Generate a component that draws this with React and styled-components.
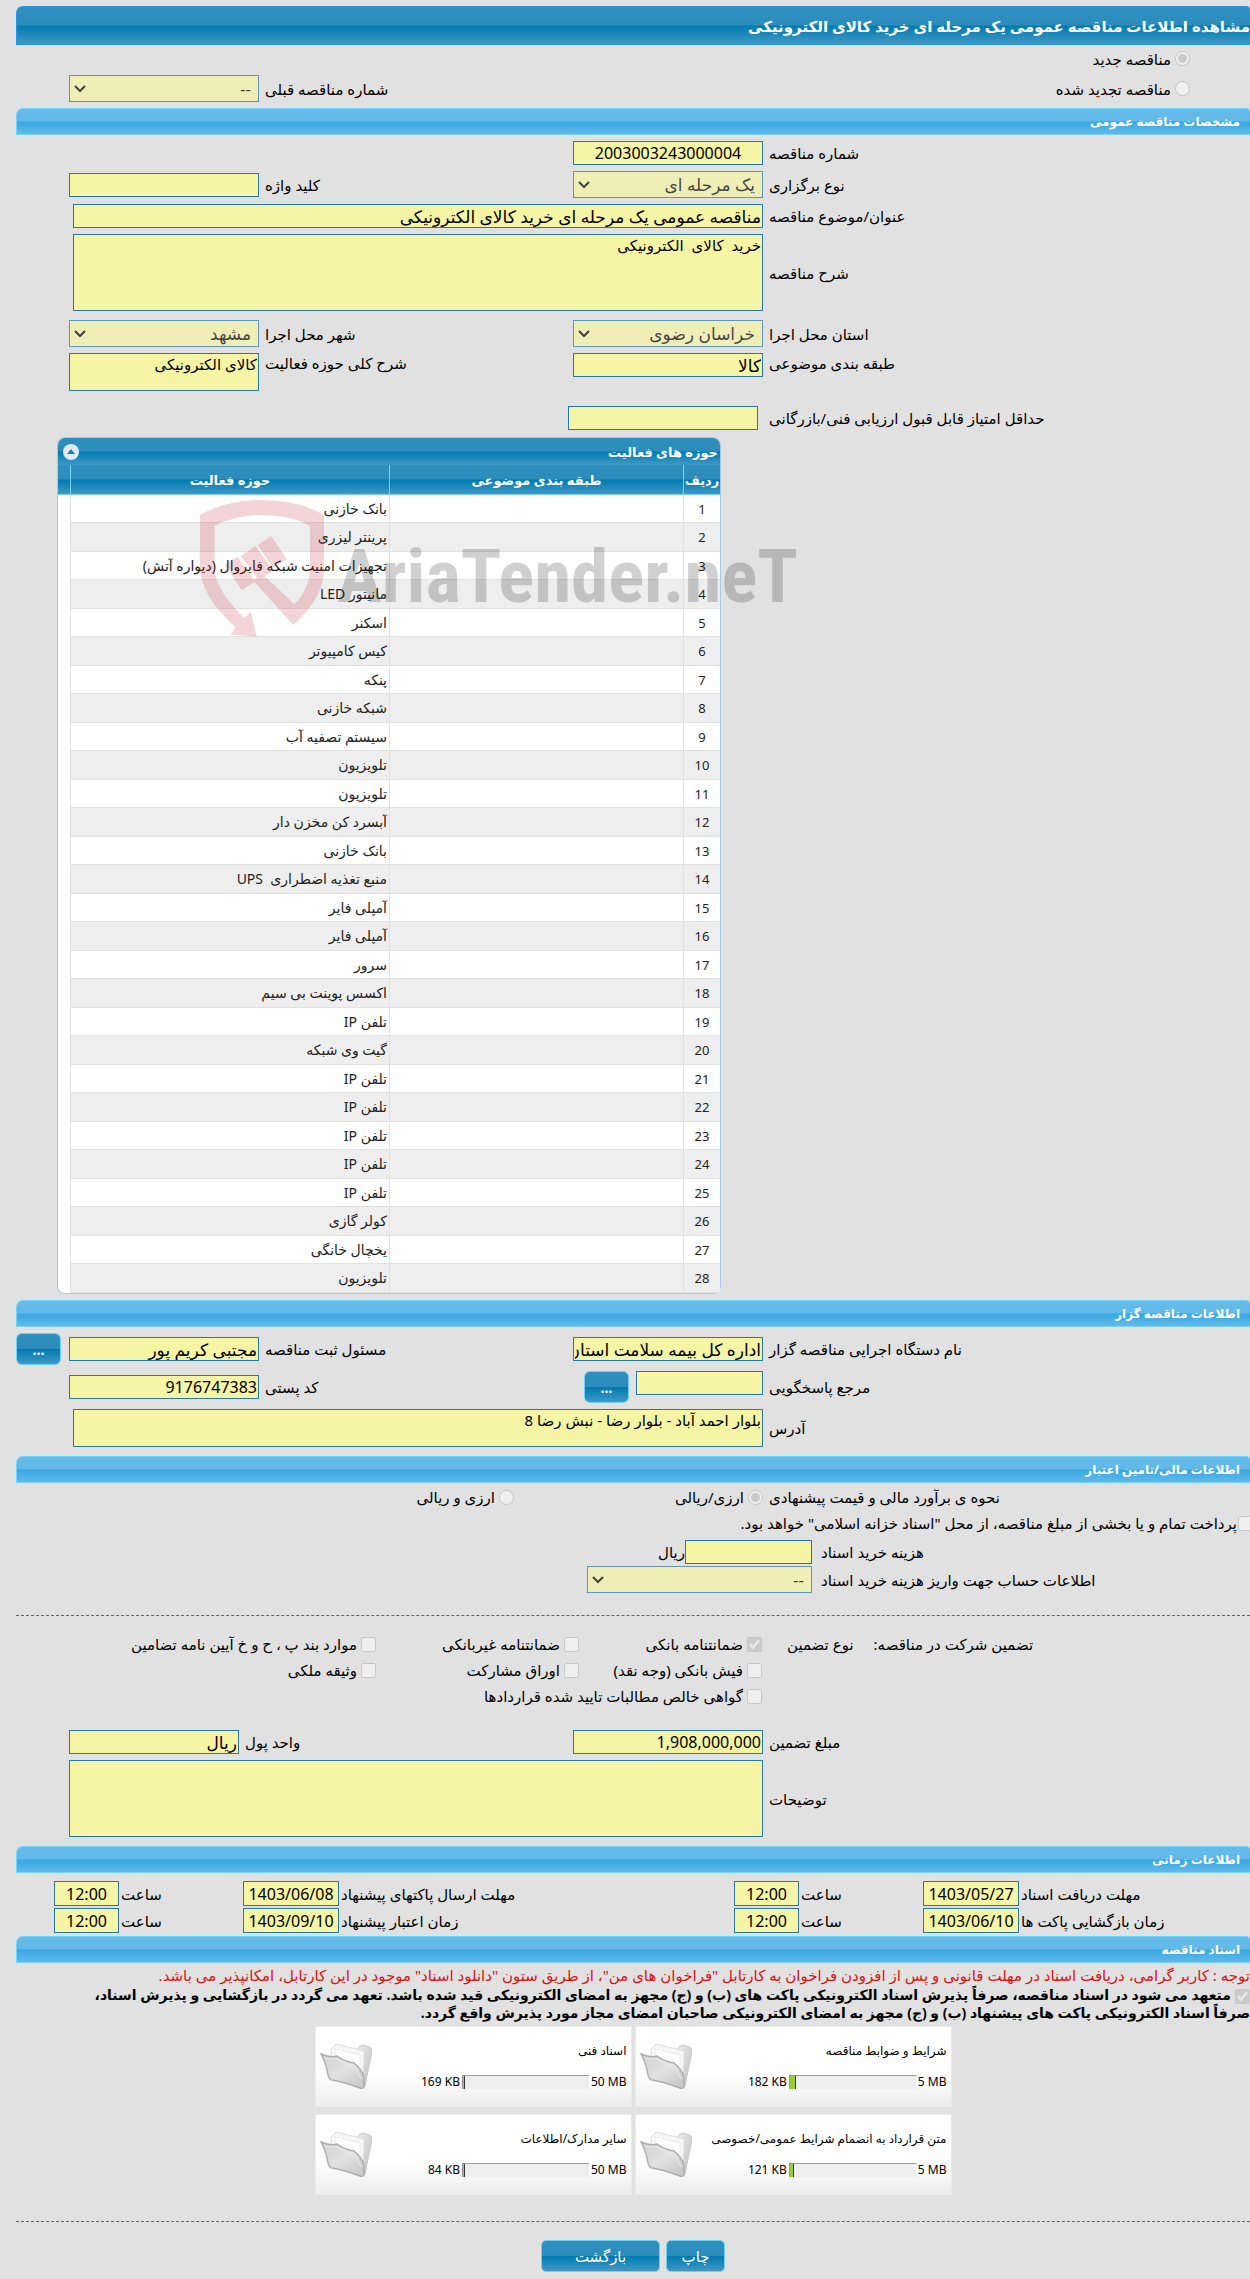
import React from 'react'
import styled, { createGlobalStyle, css } from 'styled-components'

const activities = [
  'بانک خازنی',
  'پرینتر لیزری',
  'تجهیزات امنیت شبکه فایروال (دیواره آتش)',
  'مانیتور LED',
  'اسکنر',
  'کیس کامپیوتر',
  'پنکه',
  'شبکه خازنی',
  'سیستم تصفیه آب',
  'تلویزیون',
  'تلویزیون',
  'آبسرد کن مخزن دار',
  'بانک خازنی',
  'منبع تغذیه اضطراری  UPS',
  'آمپلی فایر',
  'آمپلی فایر',
  'سرور',
  'اکسس پوینت بی سیم',
  'تلفن IP',
  'گیت وی شبکه',
  'تلفن IP',
  'تلفن IP',
  'تلفن IP',
  'تلفن IP',
  'تلفن IP',
  'کولر گازی',
  'یخچال خانگی',
  'تلویزیون',
]

const documents = [
  { title: 'شرایط و ضوابط مناقصه', size: '182 KB', max: '5 MB', fill: 5 },
  { title: 'اسناد فنی', size: '169 KB', max: '50 MB', fill: 1 },
  { title: 'متن قرارداد به انضمام شرایط عمومی/خصوصی', size: '121 KB', max: '5 MB', fill: 3 },
  { title: 'سایر مدارک/اطلاعات', size: '84 KB', max: '50 MB', fill: 1 },
]

function FolderIcon() {
  return (
    <svg width="52" height="47" viewBox="0 0 52 47" aria-hidden="true">
      <defs>
        <linearGradient id="back" x1="0" y1="0" x2="1" y2="1">
          <stop offset="0" stopColor="#f1f1f1" />
          <stop offset="1" stopColor="#bdbdbd" />
        </linearGradient>
        <linearGradient id="front" x1="0" y1="0" x2="1" y2="1">
          <stop offset="0" stopColor="#cfcfcf" />
          <stop offset="0.5" stopColor="#e2e2e2" />
          <stop offset="1" stopColor="#c4c4c4" />
        </linearGradient>
      </defs>
      <path d="M36 8 L40 3 Q46 1 51 5 Q53 8 51 13 L45 43 L40 42 Z" fill="url(#back)" stroke="#c6c6c6" />
      <path d="M11 7 Q14 3 16 1 L44 8 Q45 22 42 34 L12 18 Z" fill="#f7f7f7" stroke="#dcdcdc" />
      <path d="M15 6 L40 12 L40 28 L16 16 Z" fill="#fff" stroke="#ececec" />
      <path d="M1 11 Q10 15 17 13 Q24 18 34 20 Q42 26 44 35 L44 44 Q43 46 40 45 Q24 39 12 37 Q9 36 8 32 Q6 20 1 11 Z" fill="url(#front)" stroke="#acacac" strokeWidth="1.4" />
      <path d="M5 15 Q12 17 17 16 Q24 21 33 23 Q39 29 41 36" fill="none" stroke="#ededed" />
    </svg>
  )
}

function Watermark() {
  return (
    <Mark viewBox="0 0 600 138" width="600" height="138" aria-hidden="true">
      <g fill="#c81e28" transform="scale(0.3333) translate(-30 -30)">
        <path d="M30 75 Q110 30 217 30 Q325 30 402 75 V240 Q400 325 310 405 L190 272 L215 250 L313 343 Q360 295 360 235 V107 Q300 75 217 75 Q135 75 74 107 V235 Q76 300 163 385 L182 365 L200 440 L122 434 L137 412 Q34 320 30 235 Z" />
        <path d="M105 225 L142 200 L195 275 L155 300 Z M152 198 L196 168 L250 242 L205 268 Z M203 165 L243 138 L290 207 L250 235 Z" />
      </g>
      <text x="137" y="102" fill="#000">AriaTender.neT</text>
    </Mark>
  )
}

function Dropdown({ id, value }) {
  return (
    <SelectBox>
      <Select id={id} disabled><option>{value}</option></Select>
      <svg width="12" height="8" viewBox="0 0 12 8" aria-hidden="true">
        <path d="M1 1 L6 6 L11 1" fill="none" stroke="#000" strokeWidth="2" />
      </svg>
    </SelectBox>
  )
}

function Check({ label, checked, wide }) {
  return (
    <CheckLabel $wide={wide}>
      <Tick type="checkbox" disabled defaultChecked={checked} />
      {label}
    </CheckLabel>
  )
}

function App() {
  return (
    <Page>
      <GlobalStyle />
      <PageTitle>مشاهده اطلاعات مناقصه عمومی یک مرحله ای خرید کالای الکترونیکی</PageTitle>

      <RenewRow>
        <RadioLabel><Tick type="radio" name="kind" disabled defaultChecked />مناقصه جدید</RadioLabel>
      </RenewRow>
      <RenewRow>
        <RadioLabel><Tick type="radio" name="kind" disabled />مناقصه تجدید شده</RadioLabel>
        <Label htmlFor="prev">شماره مناقصه قبلی</Label>
        <Dropdown id="prev" value="--" />
      </RenewRow>

      <SectionTitle>مشخصات مناقصه عمومی</SectionTitle>
      <FormRow>
        <Label htmlFor="number">شماره مناقصه</Label>
        <Input id="number" $number $center readOnly defaultValue="2003003243000004" />
      </FormRow>
      <FormRow>
        <Label htmlFor="type">نوع برگزاری</Label>
        <Dropdown id="type" value="یک مرحله ای" />
        <Label htmlFor="keyword">کلید واژه</Label>
        <Input id="keyword" readOnly />
      </FormRow>
      <FormRow>
        <Label htmlFor="subject">عنوان/موضوع مناقصه</Label>
        <Wide><Input id="subject" readOnly defaultValue="مناقصه عمومی یک مرحله ای خرید کالای الکترونیکی" /></Wide>
      </FormRow>
      <FormRow>
        <Label htmlFor="desc">شرح مناقصه</Label>
        <Wide><TextArea id="desc" $tall readOnly defaultValue="خرید  کالای  الکترونیکی" /></Wide>
      </FormRow>
      <FormRow $space={9}>
        <Label htmlFor="province">استان محل اجرا</Label>
        <Dropdown id="province" value="خراسان رضوی" />
        <Label htmlFor="city">شهر محل اجرا</Label>
        <Dropdown id="city" value="مشهد" />
      </FormRow>
      <FormRow $top>
        <Label htmlFor="category">طبقه بندی موضوعی</Label>
        <Input id="category" readOnly defaultValue="کالا" />
        <Label htmlFor="scope">شرح کلی حوزه فعالیت</Label>
        <TextArea id="scope" readOnly defaultValue="کالای الکترونیکی" />
      </FormRow>
      <FormRow $space={15}>
        <Label htmlFor="score">حداقل امتیاز قابل قبول ارزیابی فنی/بازرگانی</Label>
        <Shifted><Input id="score" readOnly /></Shifted>
      </FormRow>

      <Panel>
        <PanelTitle>
          حوزه های فعالیت
          <Collapse type="button" aria-label="بستن">
            <svg width="8" height="5" viewBox="0 0 8 5"><path d="M0 5 L4 0 L8 5 Z" fill="#1a7fb5" /></svg>
          </Collapse>
        </PanelTitle>
        <Grid>
          <colgroup>
            <col width="37" />
            <col width="294" />
            <col />
            <col width="12" />
          </colgroup>
          <thead>
            <tr>
              <th>ردیف</th>
              <th>طبقه بندی موضوعی</th>
              <th>حوزه فعالیت</th>
              <th></th>
            </tr>
          </thead>
          <tbody>
            {activities.map((name, index) => (
              <tr key={index}>
                <td>{index + 1}</td>
                <td></td>
                <td>{name}</td>
                <td></td>
              </tr>
            ))}
          </tbody>
        </Grid>
        <Watermark />
      </Panel>

      <SectionTitle>اطلاعات مناقصه گزار</SectionTitle>
      <FormRow>
        <Label htmlFor="org">نام دستگاه اجرایی مناقصه گزار</Label>
        <Input id="org" readOnly defaultValue="اداره کل بیمه سلامت استان خراسان رضوی" />
        <Label htmlFor="registrar">مسئول ثبت مناقصه</Label>
        <Input id="registrar" readOnly defaultValue="مجتبی کریم پور" />
        <MoreCell><MoreButton type="button">...</MoreButton></MoreCell>
      </FormRow>
      <FormRow>
        <Label htmlFor="ref">مرجع پاسخگویی</Label>
        <Pair>
          <Input id="ref" readOnly />
          <MoreButton type="button">...</MoreButton>
        </Pair>
        <Label htmlFor="postal">کد پستی</Label>
        <Input id="postal" $number readOnly defaultValue="9176747383" />
      </FormRow>
      <FormRow>
        <Label htmlFor="address">آدرس</Label>
        <Wide><TextArea id="address" readOnly defaultValue="بلوار احمد آباد - بلوار رضا - نبش رضا 8" /></Wide>
      </FormRow>

      <SectionTitle $space={9}>اطلاعات مالی/تامین اعتبار</SectionTitle>
      <MoneyRow>
        <Label as="span">نحوه ی برآورد مالی و قیمت پیشنهادی</Label>
        <PlainLabel><Tick type="radio" name="currency" disabled defaultChecked />ارزی/ریالی</PlainLabel>
        <PlainLabel><Tick type="radio" name="currency" disabled />ارزی و ریالی</PlainLabel>
      </MoneyRow>
      <TreasuryLabel>
        <Tick type="checkbox" disabled />
        پرداخت تمام و یا بخشی از مبلغ مناقصه، از محل "اسناد خزانه اسلامی" خواهد بود.
      </TreasuryLabel>
      <CostRow>
        <Label htmlFor="cost">هزینه خرید اسناد</Label>
        <CostFields><Input id="cost" readOnly />ریال</CostFields>
      </CostRow>
      <CostRow>
        <Label htmlFor="account">اطلاعات حساب جهت واریز هزینه خرید اسناد</Label>
        <Dropdown id="account" value="--" />
      </CostRow>

      <Divider />
      <Guarantee>
        <GuaranteeTitle>
          <span>تضمین شرکت در مناقصه:</span>
          <span>نوع تضمین</span>
        </GuaranteeTitle>
        <Checks>
          <Check label="ضمانتنامه بانکی" checked />
          <Check label="ضمانتنامه غیربانکی" />
          <Check label="موارد بند پ ، ح و خ آیین نامه تضامین" />
          <Check label="فیش بانکی (وجه نقد)" />
          <Check label="اوراق مشارکت" />
          <Check label="وثیقه ملکی" />
          <Check label="گواهی خالص مطالبات تایید شده قراردادها" wide />
        </Checks>
      </Guarantee>
      <FormRow $space={22}>
        <Label htmlFor="amount">مبلغ تضمین</Label>
        <Input id="amount" $number readOnly defaultValue="1,908,000,000" />
        <UnitCell>
          <label htmlFor="unit">واحد پول</label>
          <Input id="unit" readOnly defaultValue="ریال" />
        </UnitCell>
      </FormRow>
      <FormRow>
        <Label htmlFor="notes">توضیحات</Label>
        <Wide $full><TextArea id="notes" $tall readOnly /></Wide>
      </FormRow>

      <SectionTitle $space={9}>اطلاعات زمانی</SectionTitle>
      <Times>
        <Label htmlFor="d1">مهلت دریافت اسناد</Label>
        <Input id="d1" $number $center readOnly defaultValue="1403/05/27" />
        <Label htmlFor="h1">ساعت</Label>
        <Input id="h1" $number $center readOnly defaultValue="12:00" />
        <Label htmlFor="d2">مهلت ارسال پاکتهای پیشنهاد</Label>
        <Input id="d2" $number $center readOnly defaultValue="1403/06/08" />
        <Label htmlFor="h2">ساعت</Label>
        <Input id="h2" $number $center readOnly defaultValue="12:00" />
        <span />
        <Label htmlFor="d3">زمان بازگشایی پاکت ها</Label>
        <Input id="d3" $number $center readOnly defaultValue="1403/06/10" />
        <Label htmlFor="h3">ساعت</Label>
        <Input id="h3" $number $center readOnly defaultValue="12:00" />
        <Label htmlFor="d4">زمان اعتبار پیشنهاد</Label>
        <Input id="d4" $number $center readOnly defaultValue="1403/09/10" />
        <Label htmlFor="h4">ساعت</Label>
        <Input id="h4" $number $center readOnly defaultValue="12:00" />
      </Times>

      <SectionTitle $space={3}>اسناد مناقصه</SectionTitle>
      <Notice>
        توجه : کاربر گرامی، دریافت اسناد در مهلت قانونی و پس از افزودن فراخوان به کارتابل "فراخوان های من"، از طریق ستون "دانلود اسناد" موجود در این کارتابل، امکانپذیر می باشد.
      </Notice>
      <Pledge>
        <Tick type="checkbox" disabled defaultChecked />
        متعهد می شود در اسناد مناقصه، صرفاً پذیرش اسناد الکترونیکی پاکت های (ب) و (ج) مجهز به امضای الکترونیکی قید شده باشد. تعهد می گردد در بازگشایی و پذیرش اسناد،
        <br />
        صرفاً اسناد الکترونیکی پاکت های پیشنهاد (ب) و (ج) مجهز به امضای الکترونیکی صاحبان امضای مجاز مورد پذیرش واقع گردد.
      </Pledge>

      <Cards>
        {documents.map((doc) => (
          <Card key={doc.title}>
            <CardBody>
              <span>{doc.title}</span>
              <Usage>
                <span dir="ltr">{doc.max}</span>
                <Track><Fill style={{ width: `${doc.fill}%` }} /></Track>
                <span dir="ltr">{doc.size}</span>
              </Usage>
            </CardBody>
            <FolderIcon />
          </Card>
        ))}
      </Cards>

      <Divider />
      <Actions>
        <Action type="button">چاپ</Action>
        <Action type="button" $wide>بازگشت</Action>
      </Actions>
    </Page>
  )
}

const darkGloss = css`
  background: linear-gradient(#2f90c0 0%, #2c8dbd 49%, #007ab1 51%, #4099c5 100%);
`

const GlobalStyle = createGlobalStyle`
* {
  box-sizing: border-box;
}
body {
  margin: 0;
  background: #e1e1e1;
  color: #000;
  font: 15px/20px "Noto Sans", "DejaVu Sans", sans-serif;
}
button, input, select, textarea {
  font-family: inherit;
  margin: 0;
}
`

const Page = styled.div`
  direction: rtl;
  padding: 6px 0 6px 16px;
  overflow: hidden;
`

const PageTitle = styled.h1`
  ${darkGloss}
  margin: 0;
  height: 39px;
  border: 1px solid #2b93e4;
  border-right: 0;
  border-radius: 7px 4px 0 0;
  color: #fff;
  font-size: 15px;
  line-height: 38px;
`

const SectionTitle = styled.h2`
  margin: ${({ $space }) => $space || 6}px 0 0;
  height: 27px;
  padding-right: 10px;
  border: 1px solid #74d3f8;
  border-right: 0;
  border-radius: 7px 4px 0 0;
  background: linear-gradient(#65bbea 0%, #62b9e9 49%, #36a7e0 51%, #62b9ea 100%);
  color: #fff;
  font-size: 12px;
  line-height: 26px;
`

const FormRow = styled.div`
  display: grid;
  grid-template-columns: 487fr 190px 314fr 190px 53px;
  align-items: ${({ $top }) => ($top ? 'start' : 'center')};
  margin-top: ${({ $space }) => $space || 6}px;
`

const RenewRow = styled(FormRow)`
  min-height: 27px;
  margin-top: 0;
  & + & {
    margin-top: 3px;
  }
  label + label {
    grid-column: 3;
  }
`

const MoneyRow = styled(FormRow)`
  grid-template-columns: 487fr 249px 498fr;
  margin-top: 4px;
`

const CostRow = styled(FormRow)`
  grid-template-columns: 438fr 225px 571fr;
  margin-top: 2px;
  label {
    padding-left: 9px;
  }
`

const Times = styled(FormRow)`
  grid-template-columns: 231fr 96px 124px 65px 395fr 96px 124px 65px 38px;
  row-gap: 2px;
  margin-top: 8px;
  label {
    padding-left: 2px;
  }
  input {
    height: 25px;
  }
`

const Label = styled.label`
  justify-self: end;
  padding-left: 6px;
  white-space: nowrap;
`

const PlainLabel = styled.label`
  display: flex;
  align-items: center;
  gap: 4px;
  white-space: nowrap;
`

const RadioLabel = styled(PlainLabel)`
  padding-right: 60px;
`

const TreasuryLabel = styled(PlainLabel)`
  gap: 1px;
  margin: 6px -3px 7px 0;
`

const Tick = styled.input`
  width: 15px;
  height: 15px;
  flex: none;
`

const field = css`
  display: block;
  width: 100%;
  border: 1px solid #2478ac;
  border-radius: 0;
  background: #f6f4a5;
  color: #000;
  outline: none;
`

const Input = styled.input`
  ${field}
  height: 24px;
  padding: 0 1px;
  font-size: ${({ $number }) => ($number ? 16 : 17)}px;
  text-align: ${({ $center }) => ($center ? 'center' : 'right')};
`

const TextArea = styled.textarea`
  ${field}
  height: ${({ $tall }) => ($tall ? 77 : 38)}px;
  padding: 0 1px;
  font-size: 15px;
  line-height: 20px;
  resize: none;
  overflow: hidden;
`

const SelectBox = styled.div`
  position: relative;
  opacity: 0.7;
  svg {
    position: absolute;
    left: 5px;
    top: 10px;
    pointer-events: none;
  }
`

const Select = styled.select`
  ${field}
  appearance: none;
  height: 27px;
  padding: 0 7px 0 20px;
  font-size: 17px;
  &:disabled {
    color: #000;
    opacity: 1;
  }
`

const Wide = styled.div`
  grid-column: 2 / 5;
  padding-left: ${({ $full }) => ($full ? 0 : 4)}px;
`

const Shifted = styled.div`
  width: 190px;
  margin-right: 5px;
`

const Panel = styled.section`
  position: relative;
  width: 664px;
  max-width: 100%;
  margin: 7px auto 0 41px;
  border: 1px solid #a5c9e6;
  border-radius: 8px;
  background: #fff;
`

const PanelTitle = styled.h3`
  ${darkGloss}
  display: flex;
  justify-content: space-between;
  align-items: center;
  height: 27px;
  margin: 0;
  padding: 0 2px 0 5px;
  border-radius: 7px 7px 0 0;
  color: #fff;
  font-size: 13px;
`

const Collapse = styled.button`
  display: grid;
  place-items: center;
  width: 16px;
  height: 16px;
  padding: 0;
  border: 0;
  border-radius: 50%;
  background: #dfe9f7;
`

const Grid = styled.table`
  width: 100%;
  border-spacing: 0;
  table-layout: fixed;
  font-size: 14px;
  line-height: 18px;
  th {
    ${darkGloss}
    height: 30px;
    padding: 0;
    border-bottom: 1px solid #74d3f8;
    border-left: 1px solid #74d3f8;
    color: #fff;
    font-size: 13px;
  }
  td {
    height: 28px;
    padding: 0 2px;
    border-bottom: 1px solid #e1e1e1;
    border-left: 1px solid #e1e1e1;
    color: #222;
    white-space: pre;
  }
  tr:nth-child(even) td {
    height: 29px;
    background: #eee;
  }
  td:first-child {
    text-align: center;
    font-size: 13px;
  }
  th:last-child {
    border-left: 0;
  }
  tr td:last-child {
    border: 0;
    background: #fff;
  }
  tr:last-child td:last-child {
    border-radius: 0 0 0 8px;
  }
`

const Mark = styled.svg`
  position: absolute;
  left: 142px;
  top: 62px;
  direction: ltr;
  opacity: 0.18;
  pointer-events: none;
  overflow: visible;
  text {
    font: bold 75px "Roboto Condensed", Roboto, "Liberation Sans", sans-serif;
  }
`

const MoreCell = styled.div`
  justify-self: end;
`

const MoreButton = styled.button`
  ${darkGloss}
  width: 45px;
  height: 32px;
  padding: 0;
  border: 1px solid #6fcff5;
  border-radius: 6px;
  color: #fff;
  font-size: 14px;
  font-weight: bold;
`

const Pair = styled.div`
  display: flex;
  align-items: flex-start;
  gap: 7px;
  input {
    width: 127px;
  }
`

const CostFields = styled.div`
  display: flex;
  align-items: center;
  input {
    width: 127px;
  }
`

const Divider = styled.hr`
  margin: 22px 0 0;
  border: 0;
  border-top: 1px dashed #2478a0;
`

const Guarantee = styled.div`
  display: grid;
  grid-template-columns: 463fr 771fr;
  margin-top: 16px;
`

const GuaranteeTitle = styled.div`
  display: flex;
  justify-content: flex-end;
  gap: 20px;
  line-height: 24px;
  white-space: nowrap;
`

const Checks = styled.div`
  display: grid;
  grid-template-columns: 183px 203px 1fr;
  grid-auto-rows: 24px;
  row-gap: 2px;
  padding-right: 25px;
`

const CheckLabel = styled(PlainLabel)`
  grid-column: ${({ $wide }) => ($wide ? '1 / -1' : 'auto')};
`

const UnitCell = styled.div`
  grid-column: 3 / 5;
  display: flex;
  justify-content: flex-end;
  align-items: center;
  gap: 6px;
  input {
    width: 170px;
  }
`

const Notice = styled.p`
  margin: 2px 0 0;
  color: #e01010;
  white-space: nowrap;
`

const Pledge = styled.label`
  display: block;
  margin-top: 1px;
  font-size: 14px;
  font-weight: bold;
  line-height: 18px;
  input {
    vertical-align: middle;
    margin-left: 4px;
  }
`

const Cards = styled.div`
  display: grid;
  grid-template-columns: 317px 317px;
  justify-content: center;
  gap: 7px 3px;
  margin: 4px 0 26px;
`

const Card = styled.article`
  display: flex;
  justify-content: space-between;
  align-items: center;
  height: 81px;
  padding: 0 4px;
  border: 1px solid #ebebeb;
  background: linear-gradient(#fff 60%, #ececec);
  font-size: 12px;
`

const CardBody = styled.div`
  display: grid;
  gap: 11px;
  white-space: nowrap;
`

const Usage = styled.div`
  display: flex;
  align-items: center;
  gap: 2px;
`

const Track = styled.div`
  display: flex;
  justify-content: flex-end;
  width: 127px;
  height: 14px;
  border-top: 1px solid #999;
  border-left: 1px solid #999;
  background: #eee;
`

const Fill = styled.div`
  border-right: 1px solid #333;
  background: #9acd32;
  min-width: 2px;
`

const Actions = styled.div`
  display: flex;
  justify-content: center;
  gap: 6px;
  margin-top: 18px;
`

const Action = styled.button`
  ${darkGloss}
  width: ${({ $wide }) => ($wide ? 119 : 59)}px;
  height: 32px;
  padding: 0;
  border: 1px solid #6fcff5;
  border-radius: 5px;
  color: #fff;
  font-size: 15px;
`

export default App
